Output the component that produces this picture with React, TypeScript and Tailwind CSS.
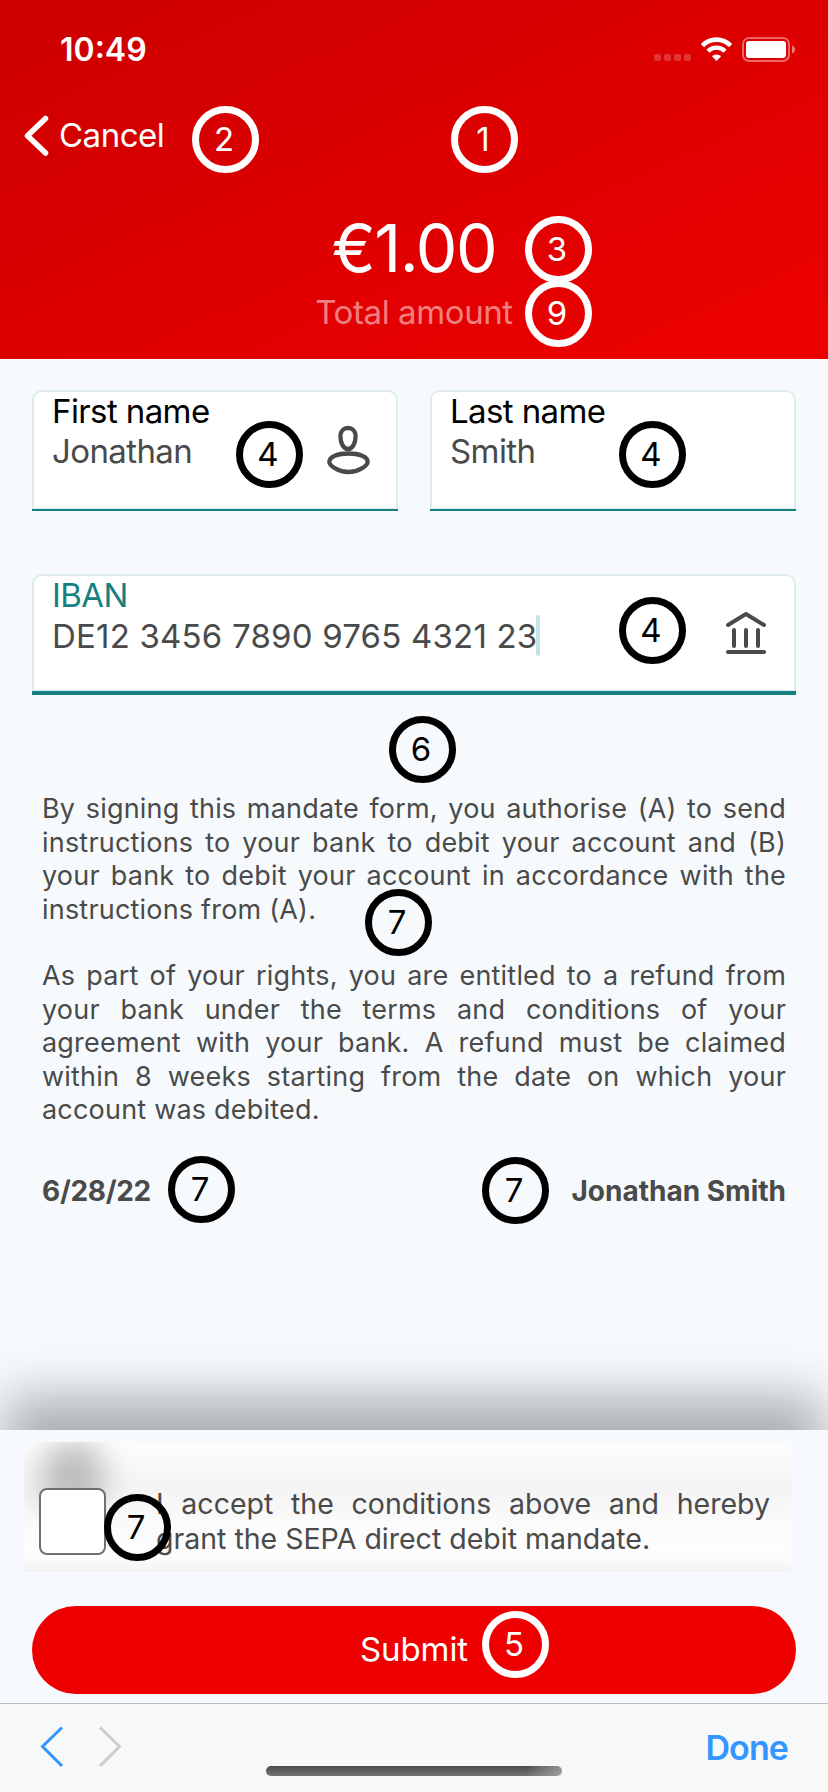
import React from "react";

type Marker = { n: number; cls: string; light?: boolean };

const markers: Marker[] = [
  { n: 2, cls: "left-[192px] top-[106px]", light: true },
  { n: 1, cls: "left-[451px] top-[106px]", light: true },
  { n: 3, cls: "left-[525px] top-[216px]", light: true },
  { n: 9, cls: "left-[525px] top-[280px]", light: true },
  { n: 4, cls: "left-[236px] top-[421px]" },
  { n: 4, cls: "left-[619px] top-[421px]" },
  { n: 4, cls: "left-[619px] top-[597px]" },
  { n: 6, cls: "left-[389px] top-[716px]" },
  { n: 7, cls: "left-[365px] top-[889px]" },
  { n: 7, cls: "left-[168px] top-[1156px]" },
  { n: 7, cls: "left-[482px] top-[1157px]" },
  { n: 7, cls: "left-[104px] top-[1494px]" },
  { n: 5, cls: "left-[482px] top-[1611px]", light: true },
];

function Badge({ n, cls, light }: Marker) {
  return (
    <div
      className={`absolute z-20 flex size-[67px] items-center justify-center rounded-full border-[7px] pr-[3px] text-[33px] leading-none ${
        light ? "border-white text-white" : "border-black text-black"
      } ${cls}`}
    >
      {n}
    </div>
  );
}

function StatusBar() {
  return (
    <div className="flex h-[100px] items-start justify-between pt-[30px] pr-[33px] pl-[60px] text-white">
      <span className="text-[32px] leading-[40px] font-semibold">10:49</span>
      <div className="flex items-start pt-[7px]">
        <div className="mt-[17px] mr-[9px] flex gap-[3px]">
          <i className="size-[7px] rounded-[2px] bg-white/20" />
          <i className="size-[7px] rounded-[2px] bg-white/20" />
          <i className="size-[7px] rounded-[2px] bg-white/20" />
          <i className="size-[7px] rounded-[2px] bg-white/20" />
        </div>
        <svg width="33" height="24" viewBox="0 0 33 24" className="mr-[9px]" fill="none" stroke="#fff">
          <path d="M2.4 8.7a19.4 19.4 0 0 1 28.2 0" strokeWidth="4.6" />
          <path d="M8 14.2a12 12 0 0 1 17 0" strokeWidth="4.4" />
          <path d="M16.5 24l-4.6-4.8a6.8 6.8 0 0 1 9.2 0z" fill="#fff" stroke="none" />
        </svg>
        <svg width="53" height="25" viewBox="0 0 53 25">
          <rect x="1" y="1" width="46" height="23" rx="6" fill="none" stroke="#fff" strokeOpacity=".4" strokeWidth="2" />
          <rect x="4" y="4" width="40" height="17" rx="3" fill="#fff" />
          <path d="M50 8.5c4 1.500 4 6.500 0 8z" fill="#fff" fillOpacity=".5" />
        </svg>
      </div>
    </div>
  );
}

function Field({
  label,
  value,
  active,
  icon,
}: {
  label: string;
  value: string;
  active?: boolean;
  icon?: React.ReactNode;
}) {
  return (
    <div className={`flex h-[121px] flex-1 flex-col border-[#15807f] ${active ? "border-b-4" : "border-b-2"}`}>
      <div className="flex flex-1 items-start justify-between rounded-t-[10px] border-2 border-b-[1px] border-[#deecef] bg-white pl-[18px]">
        <div className="-mt-px text-[33px] leading-[40px] -tracking-[0.6px]">
          <div className={active ? "text-[#15807f]" : "text-black"}>{label}</div>
          <div className={`flex items-center text-[#4a4a4a] ${active ? "tracking-[0.2px]" : ""}`}>
            {value}
            {active && <span className="-ml-px h-[41px] w-1 rounded-sm bg-[#c5e3e5]" />}
          </div>
        </div>
        {icon}
      </div>
    </div>
  );
}

const personIcon = (
  <svg width="43" height="50" viewBox="0 0 43 50" className="mt-[33px] mr-[26px]" fill="none" stroke="#4a4a4a" strokeWidth="4.300">
    <path d="M21 3c-4.500 0-7.600 3-7.600 8 0 7 3 13 7.600 13s7.600-6 7.600-13c0-5-3.100-8-7.600-8z" />
    <path d="M2.300 36.800c0-5 8.400-8.300 19.200-8.300s19.200 3.300 19.200 8.300c0 4-9.200 10.200-19.200 10.200s-19.200-6.200-19.200-10.200z" />
  </svg>
);

const bankIcon = (
  <svg width="42" height="44" viewBox="0 0 42 44" className="mt-[35px] mr-[27px]" fill="none" stroke="#4a4a4a" strokeLinecap="round" strokeLinejoin="round">
    <path d="M3 14L21 3l18 11" strokeWidth="4" />
    <path d="M9 19v16M21 19v16M33 19v16" strokeWidth="4" />
    <path d="M3 41h36" strokeWidth="4.200" />
  </svg>
);

export default function App() {
  return (
    <div className="relative flex h-[1792px] w-[828px] flex-col overflow-hidden bg-[#f6fafd] font-['Inter',sans-serif] text-[#4a4a4a]">
      <header className="h-[359px] bg-[linear-gradient(156deg,#cc0000_0%,#ee0000_100%)] text-white">
        <StatusBar />
        <div className="flex h-[72px] items-center pl-[24px]">
          <svg width="25" height="42" viewBox="0 0 25 42" fill="none" stroke="#fff" strokeWidth="5.500" strokeLinecap="round" strokeLinejoin="round">
            <path d="M21.500 3.500L3.500 20.800l18 17.300" />
          </svg>
          <span className="-mt-[2px] ml-[10px] text-[33px] leading-[40px] -tracking-[0.5px]">Cancel</span>
        </div>
        <div className="flex flex-col items-center pt-[36px]">
          <div className="text-[66px] leading-[80px] -tracking-[1.400px]">€1.00</div>
          <div className="mt-[4px] text-[33px] leading-[40px] -tracking-[0.400px] text-white/50">Total amount</div>
        </div>
      </header>

      <main className="flex flex-1 flex-col">
        <div className="flex gap-8 px-8 pt-[31px]">
          <Field label="First name" value="Jonathan" icon={personIcon} />
          <Field label="Last name" value="Smith" />
        </div>
        <div className="flex px-8 pt-[63px]">
          <Field label="IBAN" value="DE12 3456 7890 9765 4321 23" active icon={bankIcon} />
        </div>
        <div className="flex flex-col gap-[33px] px-[42px] pt-[97px] text-justify text-[27px] leading-[33.500px] tracking-[0.200px]">
          <p>
            By signing this mandate form, you authorise (A) to send instructions to your bank to debit your account and
            (B) your bank to debit your account in accordance with the instructions from (A).
          </p>
          <p>
            As part of your rights, you are entitled to a refund from your bank under the terms and conditions of your
            agreement with your bank. A refund must be claimed within 8 weeks starting from the date on which your
            account was debited.
          </p>
        </div>
        <div className="flex justify-between px-[42px] pt-[47px] text-[28px] leading-[34px] font-bold">
          <span className="-tracking-[0.300px]">6/28/22</span>
          <span>Jonathan Smith</span>
        </div>
      </main>

      <footer className="relative h-[362px] bg-[#f6fafd] shadow-[0_-38px_48px_-5px_rgba(0,0,0,0.3)]">
        <div className="flex h-[273px] flex-col bg-[#f6f9fd] pt-[12px]">
          <div className="relative ml-[24px] flex h-[130px] w-[767px] shrink-0 overflow-hidden bg-[linear-gradient(#fdfdfd,#f4f4f4_35%,#fcfcfc_70%,#fdfdfd_88%,#f2f2f2)]">
            <div className="absolute top-0 left-[18px] h-[72px] w-[62px] rounded-full bg-[#bcbcbc] blur-[15px]" />
            <div className="relative mt-[46px] ml-[15px] size-[67px] shrink-0 rounded-[8px] border-2 border-[#707070] bg-white" />
            <p className="relative mt-[44px] ml-[50px] w-[614px] text-justify text-[28.500px] leading-[35px]">
              I accept the conditions above and hereby grant the SEPA direct debit mandate.
            </p>
          </div>
          <button className="mx-8 mt-[34px] flex h-[88px] shrink-0 items-center justify-center rounded-full bg-[#ee0000] text-[33px] -tracking-[0.100px] text-white">
            Submit
          </button>
        </div>
        <div className="flex h-[89px] items-start border-t border-[#b8bcbe] bg-[#f7f9f9] pt-[22px] pr-[40px] pl-[40px]">
          <svg width="83" height="42" viewBox="0 0 83 42" fill="none" strokeWidth="3">
            <path d="M22 1.500L2.500 20.500 22 40" stroke="#3395ff" />
            <path d="M60 1.500L79.500 20.500 60 40" stroke="#cbcccc" />
          </svg>
          <span className="mt-[1px] ml-auto text-[34px] leading-[42px] font-semibold -tracking-[0.900px] text-[#3395ff]">
            Done
          </span>
        </div>
        <div className="absolute bottom-[16px] left-[266px] h-[10px] w-[296px] rounded-full bg-[linear-gradient(90deg,transparent_88%,rgba(190,190,190,0.6)),linear-gradient(#4c4e4d,#737574)]" />
      </footer>

      {markers.map((m, i) => (
        <Badge key={i} {...m} />
      ))}
    </div>
  );
}
